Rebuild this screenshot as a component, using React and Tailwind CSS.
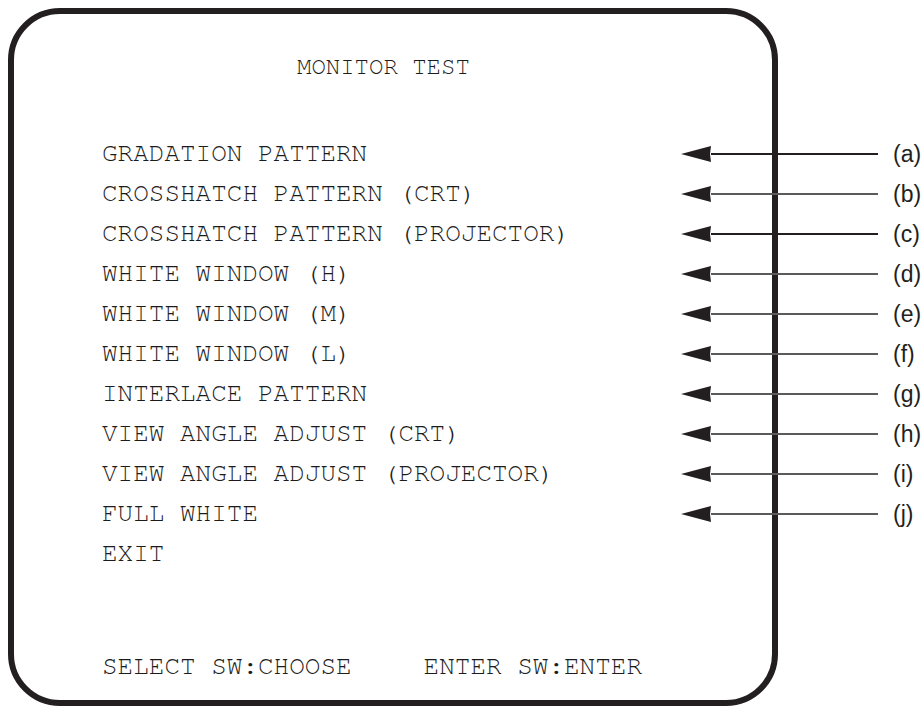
const items = [
  { text: 'GRADATION PATTERN', tag: '(a)', dark: true },
  { text: 'CROSSHATCH PATTERN (CRT)', tag: '(b)' },
  { text: 'CROSSHATCH PATTERN (PROJECTOR)', tag: '(c)', dark: true },
  { text: 'WHITE WINDOW (H)', tag: '(d)' },
  { text: 'WHITE WINDOW (M)', tag: '(e)' },
  { text: 'WHITE WINDOW (L)', tag: '(f)' },
  { text: 'INTERLACE PATTERN', tag: '(g)' },
  { text: 'VIEW ANGLE ADJUST (CRT)', tag: '(h)' },
  { text: 'VIEW ANGLE ADJUST (PROJECTOR)', tag: '(i)' },
  { text: 'FULL WHITE', tag: '(j)' },
  { text: 'EXIT' },
];

const mono = { fontFamily: '"Nimbus Mono PS", FreeMono, "Liberation Mono", "Courier New", monospace' };

const Callout = ({ tag, dark }) => (
  <div className="h-10 flex items-center">
    <svg width="30" height="16" viewBox="0 0 30 16" className="block">
      <path d="M0 8 L30 0 L29 8 L30 16 Z" fill="#231f20" />
    </svg>
    <div className={`w-[167px] ${dark ? 'h-[2px] bg-[#231f20]' : 'h-[1.5px] bg-[#5a5a5a]'}`} />
    <span className="ml-[15px] text-[23px] leading-none text-[#231f20] font-['Liberation_Sans',Arial,sans-serif]">
      {tag}
    </span>
  </div>
);

export default function App() {
  return (
    <div className="relative w-[924px] h-[707px] bg-white overflow-hidden">
      {/* Monitor screen frame */}
      <div className="absolute left-[8px] top-[8px] w-[770px] h-[698px] border-[6px] border-[#231f20] rounded-[52px]">
        <div className="flex flex-col h-full pl-[88px] pt-[33px] text-[#1c1c1c]" style={mono}>
          <div className="h-10 flex items-center ml-[195px] text-[24px]">MONITOR TEST</div>

          <div className="mt-[46px] flex flex-col">
            {items.map((it) => (
              <div key={it.text} className="h-10 flex items-center text-[26px] whitespace-pre">
                {it.text}
              </div>
            ))}
          </div>

          <div className="mt-[73px] h-10 flex items-center text-[26px] whitespace-pre">
            <span>SELECT SW:CHOOSE</span>
            <span className="ml-[72px]">ENTER SW:ENTER</span>
          </div>
        </div>
      </div>

      {/* Callout arrows */}
      <div className="absolute left-[681px] top-[134px] flex flex-col">
        {items.filter((it) => it.tag).map((it) => (
          <Callout key={it.tag} tag={it.tag} dark={it.dark} />
        ))}
      </div>
    </div>
  );
}
